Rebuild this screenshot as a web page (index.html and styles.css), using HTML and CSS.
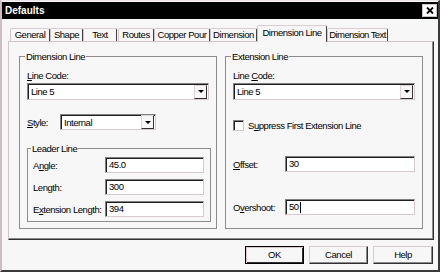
FILE: index.html
```html
<!DOCTYPE html>
<html lang="en">
<head>
    <meta charset="UTF-8">
    <meta name="viewport" content="width=device-width, initial-scale=1.0">
    <title>Defaults</title>
    <link rel="stylesheet" href="styles.css">
</head>
<body>
    <div class="dialog">
        <div class="titlebar">
            <span class="title">Defaults</span>
            <div class="close-btn">
                <svg width="8" height="7" viewBox="0 0 8 7"><path d="M1 0.5l6 6M7 0.5l-6 6" stroke="#000" stroke-width="1.8" fill="none"/></svg>
            </div>
        </div>

        <div class="tabs">
            <div class="tab">General</div>
            <div class="tab">Shape</div>
            <div class="tab">Text</div>
            <div class="tab">Routes</div>
            <div class="tab">Copper Pour</div>
            <div class="tab">Dimension</div>
            <div class="tab active">Dimension Line</div>
            <div class="tab">Dimension Text</div>
        </div>

        <div class="panel">
            <!-- left column -->
            <div class="group group-outer">
                <div class="group-title">Dimension Line</div>
                <div class="field-label"><u>L</u>ine Code:</div>
                <div class="select"><span>Line 5</span><div class="arrow"></div></div>
                <div class="style-row">
                    <span class="style-label"><u>S</u>tyle:</span>
                    <div class="select select-short"><span>Internal</span><div class="arrow"></div></div>
                </div>
                <div class="group leader">
                    <div class="group-title">Leader Line</div>
                    <div class="form-grid">
                        <span>A<u>n</u>gle:</span>
                        <div class="textbox">45.0</div>
                        <span>Len<u>g</u>th:</span>
                        <div class="textbox">300</div>
                        <span>E<u>x</u>tension Length:</span>
                        <div class="textbox">394</div>
                    </div>
                </div>
            </div>

            <!-- right column -->
            <div class="group group-outer group-right">
                <div class="group-title">Extension Line</div>
                <div class="field-label">Line <u>C</u>ode:</div>
                <div class="select"><span>Line 5</span><div class="arrow"></div></div>
                <div class="check-row">
                    <div class="checkbox"></div>
                    <span>S<u>u</u>ppress First Extension Line</span>
                </div>
                <div class="form-grid form-grid-wide">
                    <span><u>O</u>ffset:</span>
                    <div class="textbox">30</div>
                    <span>O<u>v</u>ershoot:</span>
                    <div class="textbox">50<span class="caret"></span></div>
                </div>
            </div>
        </div>

        <div class="buttons">
            <div class="btn btn-default">OK</div>
            <div class="btn">Cancel</div>
            <div class="btn btn-help">Help</div>
        </div>
    </div>
</body>
</html>
```

FILE: styles.css
```css
* {
    box-sizing: border-box;
}
body {
    margin: 0;
    background: #fff;
    font-family: "Liberation Sans", Arial, sans-serif;
    font-size: 9.5px;
    letter-spacing: -0.45px;
    color: #000;
}
.dialog {
    width: 440px;
    height: 272px;
    background: #f8f7f7;
    border-top: 1px solid #ece4e8;
    border-left: 2px solid #cdbcc4;
    border-right: 2px solid #3a3a3a;
    border-bottom: 2px solid #3a3a3a;
    padding-top: 1px;
    display: flex;
    flex-direction: column;
}
.titlebar {
    height: 17px;
    background: #000;
    color: #fff;
    display: flex;
    align-items: center;
    padding: 0 1px 0 3px;
}
.title {
    font-size: 10px;
    font-weight: bold;
    letter-spacing: 0;
}
.close-btn {
    margin-left: auto;
    width: 15px;
    height: 13px;
    background: #fff;
    border: 1px solid #d0c0c8;
    display: flex;
    align-items: center;
    justify-content: center;
}

/* tabs */
.tabs {
    display: flex;
    align-items: flex-end;
    height: 22px;
    padding-left: 8px;
    position: relative;
    z-index: 1;
}
.tab {
    height: 13px;
    line-height: 12px;
    text-align: center;
    white-space: nowrap;
    border-top: 1px solid #dccdd4;
    border-left: 1px solid #d4c2ca;
    border-right: 1px solid #404040;
    border-radius: 2px 2px 0 0;
}
.tab:nth-child(1) { width: 40px; }
.tab:nth-child(2) { width: 33px; }
.tab:nth-child(3) { width: 34px; }
.tab:nth-child(4) { width: 36px; margin-left: 1px; }
.tab:nth-child(5) { width: 56px; }
.tab:nth-child(6) { width: 47px; }
.tab:nth-child(7) { width: 70px; }
.tab:nth-child(8) { width: 61px; letter-spacing: -0.6px; }
.tab.active {
    height: 17px;
    line-height: 14px;
    margin-bottom: -1px;
    background: #f8f7f7;
}

/* panel */
.panel {
    margin-left: 6px;
    width: 426px;
    height: 199px;
    border-top: 1px solid #d4c2ca;
    border-left: 1px solid #d4c2ca;
    border-right: 1px solid #303030;
    border-bottom: 1px solid #303030;
    box-shadow: inset -1px -1px 0 #8a8a8a;
    display: flex;
    gap: 8px;
    padding: 14px 10px 0 10px;
}
.group {
    border: 1px solid #8c8c8c;
    padding: 0 5px 0 7px;
}
.group-outer {
    width: 198px;
    height: 173px;
}
.group-right {
    padding: 0 7px;
}
.group-title {
    width: fit-content;
    margin: -6px 0 0 -2px;
    padding: 0 1px;
    line-height: 11px;
    background: #f8f7f7;
}
.field-label {
    margin-top: 8px;
    line-height: 11px;
}

/* sunken controls */
.select,
.textbox,
.checkbox {
    background: #fff;
    border-top: 1px solid #808080;
    border-left: 1px solid #808080;
    border-right: 1px solid #d8c8d0;
    border-bottom: 1px solid #d8c8d0;
    box-shadow: inset 1px 1px 0 #202020;
}
.select {
    margin-top: 2px;
    width: 182px;
    height: 17px;
    display: flex;
    align-items: center;
    justify-content: space-between;
    padding: 1px 1px 1px 3px;
}
.arrow {
    width: 13px;
    height: 14px;
    background: #f8f7f7;
    border-top: 1px solid #e0d2d8;
    border-left: 1px solid #e0d2d8;
    border-right: 1px solid #303030;
    border-bottom: 1px solid #303030;
    display: flex;
    align-items: center;
    justify-content: center;
}
.arrow::after {
    content: "";
    border-left: 3px solid transparent;
    border-right: 3px solid transparent;
    border-top: 3px solid #000;
}
.style-row {
    margin-top: 14px;
    display: flex;
    align-items: center;
}
.style-label {
    width: 33px;
}
.select-short {
    margin-top: 0;
    width: 96px;
    height: 16px;
}
.leader {
    margin-top: 18px;
    height: 74px;
    padding: 0 6px 0 5px;
}
.form-grid {
    margin-top: 3px;
    display: grid;
    grid-template-columns: 72px 99px;
    grid-auto-rows: 16px;
    row-gap: 6px;
    align-items: center;
    white-space: nowrap;
}
.textbox {
    height: 16px;
    line-height: 14px;
    padding-left: 3px;
    display: flex;
    align-items: center;
}
.caret {
    width: 1px;
    height: 11px;
    margin-left: 1px;
    background: #000;
}
.check-row {
    margin-top: 20px;
    display: flex;
    align-items: center;
    gap: 4px;
    line-height: 11px;
}
.checkbox {
    width: 11px;
    height: 11px;
}
.form-grid-wide {
    margin-top: 25px;
    grid-template-columns: 52px 130px;
    row-gap: 27px;
}

/* buttons */
.buttons {
    margin-top: 6px;
    padding-right: 5px;
    display: flex;
    justify-content: flex-end;
    gap: 5px;
}
.btn {
    width: 59px;
    height: 18px;
    line-height: 16px;
    text-align: center;
    border-top: 1px solid #d8c8d0;
    border-left: 1px solid #d8c8d0;
    border-right: 1px solid #303030;
    border-bottom: 1px solid #303030;
    box-shadow: inset -1px -1px 0 #8a8a8a;
}
.btn-default {
    border: 1px solid #000;
    box-shadow: inset 1px 1px 0 #d8c8d0, inset -1px -1px 0 #303030;
}
.btn-help {
    width: 60px;
}
```
